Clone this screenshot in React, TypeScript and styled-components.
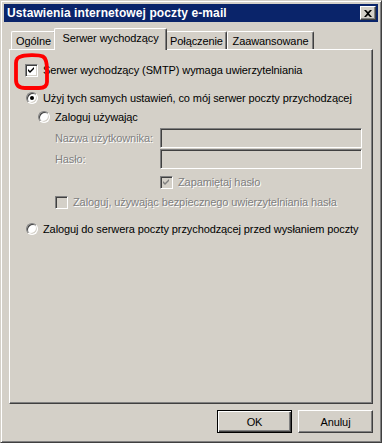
import React from "react";
import styled, { createGlobalStyle, css } from "styled-components";

const GlobalStyle = createGlobalStyle`
  html, body { margin: 0; padding: 0; background: #d4d0c8; }
  body { font-family: "Liberation Sans", Arial, sans-serif; font-size: 11px; color: #000; letter-spacing: -0.1px; }
  * { box-sizing: border-box; }
`;

const Window = styled.div`
  position: relative;
  width: 382px;
  height: 443px;
  background: #d4d0c8;
  border: 1px solid;
  border-color: #d4d0c8 #404040 #404040 #d4d0c8;
  box-shadow: inset 1px 1px #ffffff, inset -1px -1px #808080;
  padding: 3px;
  display: flex;
  flex-direction: column;
`;

const TitleBar = styled.div`
  height: 18px;
  background: #0a246a;
  display: flex;
  align-items: center;
  justify-content: space-between;
  padding: 0 2px 0 2px;
`;

const TitleText = styled.span`
  color: #fff;
  font-weight: bold;
  font-size: 12px;
  letter-spacing: 0.1px;
  padding-left: 1px;
`;

const RaisedButtonBase = css`
  background: #d4d0c8;
  border: 1px solid;
  border-color: #ffffff #404040 #404040 #ffffff;
  box-shadow: inset -1px -1px #808080;
`;

const CloseButton = styled.div`
  ${RaisedButtonBase};
  width: 16px;
  height: 14px;
  display: flex;
  align-items: center;
  justify-content: center;
`;

const Body = styled.div`
  flex: 1;
  display: flex;
  flex-direction: column;
  padding: 6px 5px 0 5px;
`;

const TabRow = styled.div`
  display: flex;
  align-items: flex-end;
  height: 21px;
  padding-left: 2px;
  position: relative;
  z-index: 2;
`;

const Tab = styled.div<{ $w: number; $active?: boolean }>`
  width: ${(p) => p.$w}px;
  height: ${(p) => (p.$active ? 22 : 18)}px;
  margin: ${(p) => (p.$active ? "0 -1px -1px -2px" : "0")};
  background: #d4d0c8;
  border-top: 1px solid #fff;
  border-left: 1px solid #fff;
  border-right: 1px solid #404040;
  box-shadow: inset -1px 0 #808080;
  border-radius: 2px 2px 0 0;
  display: flex;
  justify-content: center;
  align-items: ${(p) => (p.$active ? "flex-start" : "center")};
  padding-top: ${(p) => (p.$active ? "3px" : "0")};
  white-space: nowrap;
  position: relative;
  z-index: ${(p) => (p.$active ? 3 : 1)};
`;

const Panel = styled.div`
  position: relative;
  height: 355px;
  border: 1px solid;
  border-color: #ffffff #404040 #404040 #ffffff;
  box-shadow: inset -1px -1px #808080;
  display: flex;
  flex-direction: column;
`;

const Row = styled.div<{ $indent: number; $top: number; $h?: number }>`
  display: flex;
  align-items: center;
  margin-left: ${(p) => p.$indent}px;
  margin-top: ${(p) => p.$top}px;
  height: ${(p) => p.$h ?? 13}px;
  white-space: nowrap;
`;

const Label = styled.span<{ $disabled?: boolean; $gap?: number }>`
  margin-left: ${(p) => p.$gap ?? 5}px;
  line-height: 13px;
  color: ${(p) => (p.$disabled ? "#808080" : "#000")};
  text-shadow: ${(p) => (p.$disabled ? "1px 1px 0 #ffffff" : "none")};
`;

const FieldLabel = styled.span`
  width: 105px;
  color: #808080;
  text-shadow: 1px 1px 0 #ffffff;
  line-height: 13px;
`;

const sunken = css`
  border: 1px solid;
  border-color: #808080 #ffffff #ffffff #808080;
  box-shadow: inset 1px 1px #404040, inset -1px -1px #d4d0c8;
`;

const Checkbox = styled.div<{ $disabled?: boolean }>`
  ${sunken};
  width: 13px;
  height: 13px;
  flex: none;
  background: ${(p) => (p.$disabled ? "#d4d0c8" : "#ffffff")};
  display: flex;
  align-items: center;
  justify-content: center;
`;

const Radio = styled.div`
  width: 12px;
  height: 12px;
  flex: none;
  border-radius: 50%;
  border: 1px solid;
  border-color: #808080 #ffffff #ffffff #808080;
  box-shadow: inset 1px 1px #404040, inset -1px -1px #d4d0c8;
  background: #fff;
  display: flex;
  align-items: center;
  justify-content: center;
`;

const RadioDot = styled.div`
  width: 4px;
  height: 4px;
  border-radius: 50%;
  background: #000;
`;

const Input = styled.div`
  ${sunken};
  width: 202px;
  height: 20px;
  background: #d4d0c8;
`;

const Footer = styled.div`
  display: flex;
  justify-content: flex-end;
  gap: 6px;
  margin-top: 6px;
`;

const Button = styled.div<{ $default?: boolean }>`
  width: 75px;
  height: 23px;
  display: flex;
  align-items: center;
  justify-content: center;
  background: #d4d0c8;
  ${(p) =>
    p.$default
      ? css`
          border: 1px solid #000;
          box-shadow: inset 1px 1px #ffffff, inset -1px -1px #404040, inset -2px -2px #808080;
        `
      : css`
          border: 1px solid;
          border-color: #ffffff #404040 #404040 #ffffff;
          box-shadow: inset -1px -1px #808080;
        `}
`;

const Annotation = styled.svg`
  position: absolute;
  left: 2px;
  top: 2px;
  pointer-events: none;
`;

const Check = ({ color = "#000" }: { color?: string }) => (
  <svg width="7" height="7" viewBox="0 0 7 7">
    <path d="M0 2 L2 4 L6 0 L6 2 L2 6 L0 4 Z" fill={color} />
  </svg>
);

export default function App() {
  return (
    <>
      <GlobalStyle />
      <Window>
        <TitleBar>
          <TitleText>Ustawienia internetowej poczty e-mail</TitleText>
          <CloseButton>
            <svg width="8" height="7" viewBox="0 0 8 7">
              <path d="M0 0 L2 0 L4 2 L6 0 L8 0 L5 3.5 L8 7 L6 7 L4 5 L2 7 L0 7 L3 3.5 Z" fill="#000" />
            </svg>
          </CloseButton>
        </TitleBar>
        <Body>
          <TabRow>
            <Tab $w={45}>Ogólne</Tab>
            <Tab $w={113} $active>Serwer wychodzący</Tab>
            <Tab $w={61}>Połączenie</Tab>
            <Tab $w={87}>Zaawansowane</Tab>
          </TabRow>
          <Panel>
            <Row $indent={15} $top={14}>
              <Checkbox>
                <Check />
              </Checkbox>
              <Label>Serwer wychodzący (SMTP) wymaga uwierzytelniania</Label>
            </Row>
            <Row $indent={16} $top={15} $h={12}>
              <Radio>
                <RadioDot />
              </Radio>
              <Label>Użyj tych samych ustawień, co mój serwer poczty przychodzącej</Label>
            </Row>
            <Row $indent={28} $top={7} $h={12}>
              <Radio />
              <Label>Zaloguj używając</Label>
            </Row>
            <Row $indent={45} $top={5} $h={20}>
              <FieldLabel>Nazwa użytkownika:</FieldLabel>
              <Input />
            </Row>
            <Row $indent={45} $top={1} $h={20}>
              <FieldLabel>Hasło:</FieldLabel>
              <Input />
            </Row>
            <Row $indent={150} $top={7}>
              <Checkbox $disabled>
                <Check color="#808080" />
              </Checkbox>
              <Label $disabled>Zapamiętaj hasło</Label>
            </Row>
            <Row $indent={45} $top={7}>
              <Checkbox $disabled />
              <Label $disabled>Zaloguj, używając bezpiecznego uwierzytelniania hasła</Label>
            </Row>
            <Row $indent={16} $top={14} $h={12}>
              <Radio />
              <Label>Zaloguj do serwera poczty przychodzącej przed wysłaniem poczty</Label>
            </Row>
            <Annotation width="40" height="40" viewBox="0 0 40 40">
              <path
                d="M8 5 C12 2.5, 27 2.5, 31 4.5 C34.5 6.5, 35 12, 35 18 L35 30 C35 34.5, 32 36, 27 36 L13 36 C7 36, 4 33.5, 4 28 L4 11 C4 7, 5.5 5, 10 4"
                fill="none"
                stroke="#ff0000"
                strokeWidth="3.8"
                strokeLinecap="round"
                strokeLinejoin="round"
              />
            </Annotation>
          </Panel>
          <Footer>
            <Button $default>OK</Button>
            <Button>Anuluj</Button>
          </Footer>
        </Body>
      </Window>
    </>
  );
}
